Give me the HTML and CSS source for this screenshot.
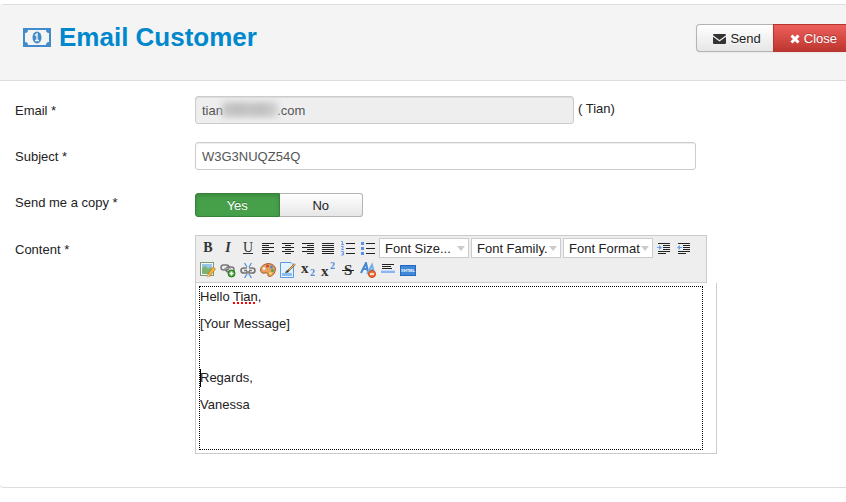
FILE: index.html
```html
<!DOCTYPE html>
<html lang="en">

<head>
    <meta charset="utf-8" />
    <title>Email Customer</title>
    <link rel="stylesheet" href="styles.css">
</head>

<body>
<div class="panel">
    <header class="panel-head">
        <h1>
            <svg width="28" height="19" viewBox="0 0 28 19"><path fill="#428bca" fill-rule="evenodd" d="M0 0H28V19H0ZM5 2A3 3 0 0 1 2 5V14A3 3 0 0 1 5 17H23A3 3 0 0 1 26 14V5A3 3 0 0 1 23 2Z"/><ellipse cx="14" cy="9.500" rx="4.500" ry="6" fill="#428bca"/><path fill="none" stroke="#f4f4f4" stroke-width="1.400" d="M12 7.500L14 6V12M12 12.500H16"/></svg>
            Email Customer
        </h1>
        <div class="actions">
            <button type="button" class="btn">
                <svg width="13" height="10" viewBox="0 0 13 10"><path fill="#333" d="M1 0H12Q13 0 13 1.200L6.500 6L0 1.200Q0 0 1 0ZM0 2.700L6.500 7.500L13 2.700V9Q13 10 12 10H1Q0 10 0 9Z"/></svg>
                Send
            </button>
            <button type="button" class="btn btn-danger">
                <svg width="10" height="10" viewBox="0 0 10 10"><path stroke="#fff" stroke-width="3" d="M1.500 1.500L8.500 8.500M8.500 1.500L1.500 8.500"/></svg>
                Close
            </button>
        </div>
    </header>

    <form class="panel-body">
        <div class="row">
            <label class="name" for="email">Email *</label>
            <div class="field">
                <div class="masked">
                    <input type="text" id="email" class="text email" readonly value="tian&nbsp;&nbsp;&nbsp;&nbsp;&nbsp;&nbsp;&nbsp;&nbsp;&nbsp;&nbsp;&nbsp;&nbsp;&nbsp;&nbsp;&nbsp;.com">
                    <span class="smudge"></span>
                </div>
                <span class="who">( Tian)</span>
            </div>
        </div>
        <div class="row">
            <label class="name" for="subject">Subject *</label>
            <div class="field"><input type="text" id="subject" class="text subject" value="W3G3NUQZ54Q"></div>
        </div>
        <div class="row copy-row">
            <span class="name" id="copyLabel">Send me a copy *</span>
            <div class="field">
                <div class="switch" role="radiogroup" aria-labelledby="copyLabel">
                    <input type="radio" name="copy" id="copyYes" checked><label for="copyYes">Yes</label>
                    <input type="radio" name="copy" id="copyNo"><label for="copyNo">No</label>
                </div>
            </div>
        </div>
        <div class="row">
            <span class="name" id="contentLabel">Content *</span>
            <div class="field">
                <div class="editor">
                    <div class="toolbar">
                        <button type="button" class="tool" aria-label="Bold"><b>B</b></button>
                        <button type="button" class="tool" aria-label="Italic"><b><i>I</i></b></button>
                        <button type="button" class="tool" aria-label="Underline"><u>U</u></button>
                        <button type="button" class="tool" aria-label="Align left"><svg viewBox="0 0 16 16"><path class="line" d="M2 3.500H14M2 5.500H9M2 7.500H14M2 9.500H9M2 11.500H14M2 13.500H9"/></svg></button>
                        <button type="button" class="tool" aria-label="Align center"><svg viewBox="0 0 16 16"><path class="line" d="M2 3.500H14M5 5.500H11M2 7.500H14M5 9.500H11M2 11.500H14M5 13.500H11"/></svg></button>
                        <button type="button" class="tool" aria-label="Align right"><svg viewBox="0 0 16 16"><path class="line" d="M2 3.500H14M7 5.500H14M2 7.500H14M7 9.500H14M2 11.500H14M7 13.500H14"/></svg></button>
                        <button type="button" class="tool" aria-label="Justify"><svg viewBox="0 0 16 16"><path class="line" d="M2 3.500H14M2 5.500H14M2 7.500H14M2 9.500H14M2 11.500H14M2 13.500H14"/></svg></button>
                        <button type="button" class="tool" aria-label="Numbered list"><svg viewBox="0 0 16 16"><path class="line" d="M6 3.500H15M6 8.500H15M6 13.500H15"/><path class="blue" d="M1 1.500H2.500V4M1 4.500H4M1 6.500H3.500L1.500 9.500H4M1 11.500H3.500V15H1M2 13.500H3"/></svg></button>
                        <button type="button" class="tool" aria-label="Bullet list"><svg viewBox="0 0 16 16"><path class="line" d="M6 3.500H15M6 8.500H15M6 13.500H15"/><g fill="#5c8fe8"><rect x="1" y="2" width="3" height="3"/><rect x="1" y="7" width="3" height="3"/><rect x="1" y="12" width="3" height="3"/></g></svg></button>
                        <span class="drop"><select aria-label="Font size"><option>Font Size...</option></select></span>
                        <span class="drop"><select aria-label="Font family"><option>Font Family.</option></select></span>
                        <span class="drop"><select aria-label="Font format"><option>Font Format</option></select></span>
                        <button type="button" class="tool" aria-label="Indent"><svg viewBox="0 0 16 16"><path class="line" d="M2 3.500H14M7 5.500H14M7 7.500H14M7 9.500H14M2 11.500H14M2 13.500H10"/><path fill="#6fa5ef" d="M1 7H3V5L6 7.500L3 10V8H1Z"/></svg></button>
                        <button type="button" class="tool" aria-label="Outdent"><svg viewBox="0 0 16 16"><path class="line" d="M2 3.500H14M7 5.500H14M7 7.500H14M7 9.500H14M2 11.500H14M2 13.500H10"/><path fill="#6fa5ef" d="M6 7H4V5L1 7.500L4 10V8H6Z"/></svg></button>
                        <button type="button" class="tool" aria-label="Image"><svg viewBox="0 0 16 16"><rect x="0.500" y="0.500" width="13" height="13" fill="#f4f8f2" stroke="#809879"/><path fill="#99c5ed" d="M2 2H12V7H2Z"/><path fill="#7db36f" d="M2 7Q5 1 8 7L10 5L12 7V12H2Z"/><path fill="#f3b23c" stroke="#b47924" stroke-width=".7" d="M7 15L8 12L13 5L15.500 7L10 14Z"/><path fill="#fff" d="M7 15L8 13L9 14Z"/></svg></button>
                        <button type="button" class="tool" aria-label="Insert link"><svg viewBox="0 0 16 16"><g fill="none" stroke="#777" stroke-width="1.500"><rect x="1" y="3" width="8" height="5" rx="2.500"/><rect x="6" y="5" width="8" height="5" rx="2.500"/></g><path stroke="#aaa" d="M4 6.500H11"/><circle cx="11.500" cy="11.500" r="3.500" fill="#46a536" stroke="#26791e"/><path stroke="#fff" stroke-width="1.500" d="M9.500 11.500H13.500M11.500 9.500V13.500"/></svg></button>
                        <button type="button" class="tool" aria-label="Remove link"><svg viewBox="0 0 16 16"><path fill="none" stroke="#777" stroke-width="1.700" d="M7 6H4Q1 6 1 8.500T4 11H7V9M9 6H12Q15 6 15 8.500T12 11H9V9M4 8.500H7M9 8.500H12"/><path fill="none" stroke="#5792df" stroke-width="1.300" d="M4.500 1L7 5M11.500 1L9 5M4.500 16L7 12M11.500 16L9 12"/></svg></button>
                        <button type="button" class="tool" aria-label="Text color"><svg viewBox="0 0 16 16"><path fill="#e8a15c" stroke="#a85d2d" d="M.5 8Q1 2.500 8 1.500Q15 2 15.500 7Q15 13 10 14.500Q7 14.500 8 12Q8 10 5 11Q1 12 .5 8Z"/><circle cx="4" cy="6.500" r="1.500" fill="#efe8e8"/><circle cx="7.500" cy="4" r="1.500" fill="#d04333"/><circle cx="11.500" cy="5" r="1.500" fill="#4c85d5"/><circle cx="12.500" cy="8.500" r="1.500" fill="#55a44a"/><circle cx="10.500" cy="11.500" r="1.300" fill="#f7e265"/></svg></button>
                        <button type="button" class="tool" aria-label="Background color"><svg viewBox="0 0 16 16"><path fill="#e4f1ff" stroke="#5b9be3" d="M.5 .5H11L13.500 3V15.500H.5Z"/><path fill="#8dbcf1" d="M2 11H12V14H2Z"/><path stroke="#8c6335" stroke-width="2" d="M8 9L15 2"/><path stroke="#f2bd55" d="M9 8L15 2"/><path fill="#444" d="M5 11Q6 8 8 8L9 10Q7 11 5 11Z"/></svg></button>
                        <button type="button" class="tool" aria-label="Subscript"><svg viewBox="0 0 16 16"><text class="letter" x="1" y="11">x</text><text class="digit" x="10" y="14">2</text></svg></button>
                        <button type="button" class="tool" aria-label="Superscript"><svg viewBox="0 0 16 16"><text class="letter" x="1" y="14">x</text><text class="digit" x="10" y="7">2</text></svg></button>
                        <button type="button" class="tool" aria-label="Strikethrough"><svg viewBox="0 0 16 16"><text class="letter" x="4" y="13">S</text><path class="line" d="M2 8.500H14"/></svg></button>
                        <button type="button" class="tool" aria-label="Remove format"><svg viewBox="0 0 16 16"><g fill="none" stroke="#4788d2" stroke-width="2"><path d="M1 11L6 1L8 10M3 7H8"/><path stroke="#76aee9" d="M7 12L12 3L14 11M9 8H14"/></g><circle cx="12" cy="12" r="3.500" fill="#ed7135" stroke="#c14a18"/><path stroke="#fff" stroke-width="1.500" d="M10 12H14"/></svg></button>
                        <button type="button" class="tool" aria-label="Horizontal rule"><svg viewBox="0 0 16 16"><path class="line" d="M2 2.500H14M2 4.500H11M2 6.500H12"/><path fill="#8eb5ef" d="M1 8H15V11H1Z"/><path fill="#c5dcff" d="M1 8H15V9H1Z"/></svg></button>
                        <button type="button" class="tool" aria-label="Show source"><span class="xhtml">XHTML</span></button>
                    </div>
                    <div class="frame">
                        <div class="message" contenteditable="true" spellcheck="false" role="textbox" aria-multiline="true" aria-labelledby="contentLabel">
                            <p>Hello <span class="misspelt">Tian</span>,</p>
                            <p>[Your Message]</p>
                            <p><br></p>
                            <p class="caret">Regards,</p>
                            <p>Vanessa</p>
                        </div>
                    </div>
                </div>
            </div>
        </div>
    </form>
</div>
</body>
</html>
```
FILE: styles.css
```css
* {
    box-sizing: border-box;
}

body {
    margin: 0;
    padding-top: 4px;
    background: #fff;
    color: #222;
    font: 13px/18px "Liberation Sans", Arial, sans-serif;
    overflow-x: hidden;
}

button, input, select {
    font: inherit;
    color: inherit;
    margin: 0;
}

.panel {
    border: 1px solid #ddd;
    border-width: 1px 0;
    border-radius: 4px 0 0 4px;
    box-shadow: 0 2px 0 #f7f7f7;
}

.panel-head {
    display: flex;
    justify-content: space-between;
    align-items: flex-start;
    padding: 19px 0 28px 23px;
    border-bottom: 1px solid #ddd;
    border-radius: 4px 0 0 0;
    background: #f4f4f4;
}

h1 {
    display: flex;
    align-items: center;
    gap: 8px;
    margin: 0;
    color: #08c;
    font-size: 26px;
    line-height: 26px;
}

/* the group runs past the right edge of the panel */
.actions {
    display: flex;
    margin-right: -3px;
}

.btn {
    display: flex;
    align-items: center;
    gap: 4px;
    height: 28px;
    padding: 1px 12px 0 16px;
    border: 1px solid #b3b3b3;
    border-right: 0;
    border-radius: 4px 0 0 4px;
    background: linear-gradient(#fff, #e6e6e6);
    box-shadow: 0 1px 2px rgba(0, 0, 0, .05);
    text-shadow: 0 1px 1px rgba(255, 255, 255, .75);
}

.btn-danger {
    padding-right: 13px;
    margin-right: -1px;
    border-color: #b5362e;
    border-radius: 0;
    background: linear-gradient(#ee5f5b, #bd362f);
    color: #fff;
    text-shadow: 0 -1px 0 rgba(0, 0, 0, .25);
}

.panel-body {
    padding: 15px 15px 33px;
}

.row {
    display: flex;
    margin-bottom: 18px;
}

.row:last-child {
    margin-bottom: 0;
}

.name {
    flex: 0 0 180px;
    padding-top: 6px;
}

.field {
    display: flex;
    flex: 1;
    min-width: 0;
}

.text {
    width: 100%;
    height: 28px;
    padding: 4px 6px;
    border: 1px solid #ccc;
    border-radius: 3px;
    box-shadow: inset 0 1px 1px rgba(0, 0, 0, .075);
    color: #555;
}

.masked {
    position: relative;
    flex: 0 1 379px;
}

.email {
    background: #eee;
}

.subject {
    max-width: 501px;
}

.smudge {
    position: absolute;
    left: 27px;
    top: 6px;
    width: 56px;
    height: 15px;
    background: linear-gradient(90deg, #cacaca, #bdbdbd 30%, #c6c6c6 45%, #bfbfbf 70%, #d2d2d2);
    filter: blur(3px);
}

.who {
    padding: 4px 0 0 4px;
}

.copy-row {
    min-height: 29px;
}

.switch {
    display: flex;
    width: 168px;
    height: 24px;
    margin-top: 5px;
}

.switch input {
    position: absolute;
    opacity: 0;
}

.switch label {
    flex: 1;
    border: 1px solid #b3b3b3;
    border-left: 0;
    border-radius: 0 3px 3px 0;
    background: linear-gradient(#fff, #e6e6e6);
    line-height: 23px;
    text-align: center;
}

.switch label:first-of-type {
    border-left: 1px solid #b3b3b3;
    border-radius: 3px 0 0 3px;
}

.switch input:checked + label {
    border-color: #378137;
    background: #46a04a;
    box-shadow: inset 0 2px 4px rgba(0, 0, 0, .15);
    color: #fff;
    text-shadow: 0 -1px 0 rgba(0, 0, 0, .25);
}

.editor {
    flex: 0 1 522px;
    min-width: 0;
}

.toolbar {
    display: flex;
    flex-wrap: wrap;
    row-gap: 2px;
    max-width: 512px;
    padding: 2px;
    border: 1px solid #ccc;
    background: #eee;
}

.tool {
    display: flex;
    align-items: center;
    justify-content: center;
    width: 20px;
    height: 20px;
    padding: 0;
    border: 0;
    background: none;
    color: #333;
    font-family: "Liberation Serif", serif;
    font-size: 14px;
    line-height: 20px;
}

.tool svg {
    width: 16px;
    height: 16px;
}

.line {
    fill: none;
    stroke: #222;
}

.blue {
    fill: none;
    stroke: #6f9fec;
}

.letter {
    fill: #333;
    font-weight: bold;
    font-size: 15px;
}

.digit {
    fill: #4f8be0;
    font-weight: bold;
    font-size: 10px;
}

.xhtml {
    width: 16px;
    height: 11px;
    border: 1px solid #2469bd;
    background: #3f87d8;
    color: #fff;
    font: bold 4px/9px "Liberation Sans", sans-serif;
    text-align: center;
}

.drop {
    position: relative;
    width: 90px;
    height: 20px;
    margin: 0 1px;
}

.drop select {
    width: 100%;
    height: 20px;
    padding: 1px 8px 0 5px;
    border: 1px solid #ccc;
    border-radius: 0;
    background: #fff;
    appearance: none;
}

.drop::after {
    content: "";
    position: absolute;
    right: 4px;
    top: 8px;
    border: 4px solid transparent;
    border-top: 5px solid #ccc;
    border-bottom: 0;
    pointer-events: none;
}

.frame {
    padding: 3px 13px 3px 3px;
    border: 1px solid #ccc;
    border-top: 0;
}

.message {
    min-height: 164px;
    padding-top: 1px;
    border: 1px dotted #000;
    outline: 0;
}

.message p {
    margin: 0 0 9px;
}

.misspelt {
    text-decoration: underline dotted #f00 2px;
    text-underline-offset: 1px;
}

.caret {
    box-shadow: inset 1px 0 0 #000;
}
```
